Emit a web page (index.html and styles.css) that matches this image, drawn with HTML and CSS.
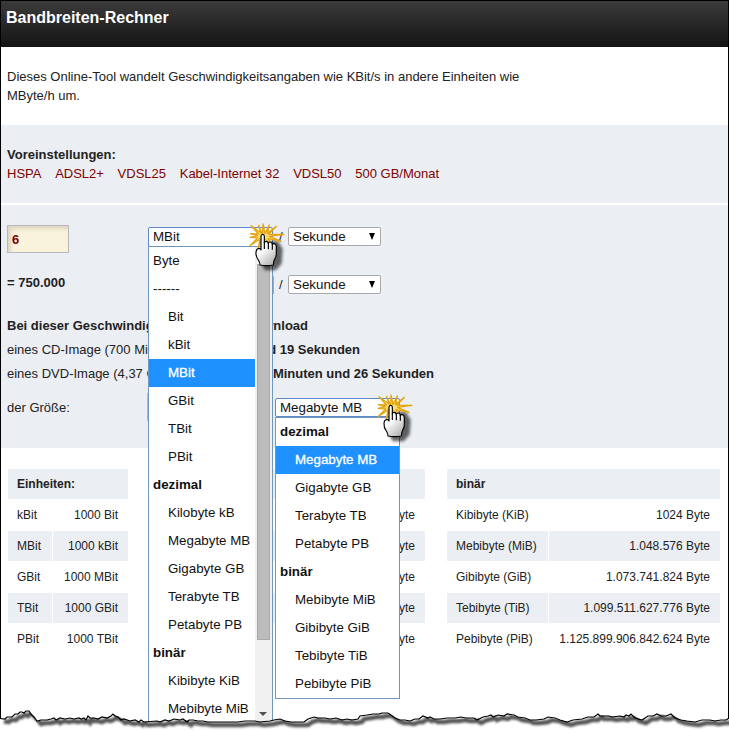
FILE: index.html
```html
<!DOCTYPE html>
<html lang="de">
<head>
<meta charset="utf-8">
<title>Bandbreiten-Rechner</title>
<link rel="stylesheet" href="styles.css">
</head>
<body>
<svg class="defs" width="0" height="0" aria-hidden="true">
  <defs>
    <filter id="soft" x="-50%" y="-50%" width="200%" height="200%"><feGaussianBlur stdDeviation="5"/></filter>
    <linearGradient id="skin" x1="0" y1="0" x2="0.6" y2="1"><stop offset="0.5" stop-color="#fff"/><stop offset="1" stop-color="#bbb"/></linearGradient>
    <symbol id="click" viewBox="0 0 180 180">
      <path d="M78 66h30l14 24-3 44-18 20H68l-8-16z" fill="#000" opacity=".6" filter="url(#soft)"/>
      <path d="M62 48 63 15 69 43 82 18 76 43 103 22 80 46 126 46 82 52 117 67 78 59 88 76 62 56 49 86 54 60 24 80 47 57 24 55 46 50 25 44 49 45 27 20 56 41 50 19z" fill="#f9dc70" stroke="#e3a611" stroke-width="4" stroke-linejoin="round"/>
      <path d="M57 92V52q0-6 5-6t5 6v20q1-5 6-5t6 6q1-4 6-4t6 7q2-3 6-2t6 7v22q0 10-5 17-3 7-4 18-20 4-40 0 0-8-5-15-8-10-7-23 1-11 9-12 4 0 6 5z" fill="url(#skin)" stroke="#000" stroke-width="3.5" stroke-linejoin="round"/>
      <path d="M67 70v20M79 72v19M91 75v17" stroke="#000" stroke-width="3.5"/>
    </symbol>
  </defs>
</svg>
<div class="page">
  <header class="head"><h1>Bandbreiten-Rechner</h1></header>
  <p class="intro">Dieses Online-Tool wandelt Geschwindigkeitsangaben wie KBit/s in andere Einheiten wie<br>MByte/h um.</p>
  <section class="presets">
    <b>Voreinstellungen:</b>
    <nav><a>HSPA</a><a>ADSL2+</a><a>VDSL25</a><a>Kabel-Internet 32</a><a>VDSL50</a><a>500 GB/Monat</a></nav>
  </section>
  <section class="calc">
    <div class="row">
      <div class="first"><div class="field">6</div></div>
      <div class="select unit focus">MBit
        <div class="menu long">
          <ul>
            <li>Byte</li><li>------</li><li class="sub">Bit</li><li class="sub">kBit</li><li class="sub on">MBit</li><li class="sub">GBit</li><li class="sub">TBit</li><li class="sub">PBit</li>
            <li class="group">dezimal</li><li class="sub">Kilobyte kB</li><li class="sub">Megabyte MB</li><li class="sub">Gigabyte GB</li><li class="sub">Terabyte TB</li><li class="sub">Petabyte PB</li>
            <li class="group">binär</li><li class="sub">Kibibyte KiB</li><li class="sub">Mebibyte MiB</li>
          </ul>
          <div class="bar"><div class="thumb"></div><div class="down"></div></div>
        </div>
        <svg class="cursor c1"><use href="#click"/></svg>
      </div>
      <span class="slash">/</span>
      <div class="select time">Sekunde<i></i></div>
    </div>
    <div class="row second">
      <div class="first"><b>= 750.000</b></div>
      <div class="select unit wide"></div>
      <span class="slash">/</span>
      <div class="select time">Sekunde<i></i></div>
    </div>
    <div class="result r1"><b>Bei dieser Geschwindig</b><b>Download</b></div>
    <div class="result r2"><span>eines CD-Image (700 Mi</span><b>und 19 Sekunden</b></div>
    <div class="result r3"><span>eines DVD-Image (4,37 G</span><b>Minuten und 26 Sekunden</b></div>
    <div class="row size">
      <div class="first">der Größe:</div>
      <div class="field blank"></div>
      <div class="select mega focus">Megabyte MB
        <div class="menu short">
          <ul>
            <li class="group">dezimal</li><li class="sub on">Megabyte MB</li><li class="sub">Gigabyte GB</li><li class="sub">Terabyte TB</li><li class="sub">Petabyte PB</li>
            <li class="group">binär</li><li class="sub">Mebibyte MiB</li><li class="sub">Gibibyte GiB</li><li class="sub">Tebibyte TiB</li><li class="sub">Pebibyte PiB</li>
          </ul>
        </div>
        <svg class="cursor c2"><use href="#click"/></svg>
      </div>
    </div>
  </section>
  <section class="tables">
    <table class="t1">
      <colgroup><col class="name"><col></colgroup>
      <tr><th colspan="2">Einheiten:</th></tr>
      <tr><td>kBit</td><td>1000 Bit</td></tr>
      <tr><td>MBit</td><td>1000 kBit</td></tr>
      <tr><td>GBit</td><td>1000 MBit</td></tr>
      <tr><td>TBit</td><td>1000 GBit</td></tr>
      <tr><td>PBit</td><td>1000 TBit</td></tr>
    </table>
    <table class="t2">
      <colgroup><col class="name"><col></colgroup>
      <tr><th colspan="2"></th></tr>
      <tr><td></td><td>Byte</td></tr>
      <tr><td></td><td>Byte</td></tr>
      <tr><td></td><td>Byte</td></tr>
      <tr><td></td><td>Byte</td></tr>
      <tr><td></td><td>Byte</td></tr>
    </table>
    <table class="t3">
      <colgroup><col class="name"><col></colgroup>
      <tr><th colspan="2">binär</th></tr>
      <tr><td>Kibibyte (KiB)</td><td>1024 Byte</td></tr>
      <tr><td>Mebibyte (MiB)</td><td>1.048.576 Byte</td></tr>
      <tr><td>Gibibyte (GiB)</td><td>1.073.741.824 Byte</td></tr>
      <tr><td>Tebibyte (TiB)</td><td>1.099.511.627.776 Byte</td></tr>
      <tr><td>Pebibyte (PiB)</td><td>1.125.899.906.842.624 Byte</td></tr>
    </table>
  </section>
  <svg class="torn" viewBox="0 0 729 31">
    <defs>
      <path id="edge" d="M0 18.500 5 19 7 17 12 17 15 14 18 14 20 12 22 12 24 13 26 11 29 11 31 14 34 17 37 21 41 20 47 20 51 19 54 18 56 20 60 18 65 19 70 18 74 19 79 18 81 19 84 18 86 20 88 16 90 18 94 18 98 19 102 17 107 18 111 16 113 14 115 16 118 17 121 20 124 19 130 21 135 20 139 22 141 20 144 22 157 21 160 22 165 20 169 21 174 19 180 20 183 19 187 22 189 20 193 20 198 21 203 21 208 22 238 22 245 21 255 21 260 22 270 21 274 20 280 19 285 21 291 22 304 22 308 19 314 17 318 18 325 18 330 19 336 18 342 20 347 19 352 20 358 19 360 16 367 15 373 14 379 14 382 13 388 13 391 15 395 18 400 20 405 20 410 21 415 19 419 19 423 16 428 18 430 17 434 19 440 19 447 18 455 18 461 17 466 18 474 18 477 20 483 17 488 16 491 15 493 17 498 15 504 16 507 14 514 15 518 17 525 18 530 20 536 20 544 19 548 17 555 18 560 20 567 22 573 20 582 19 588 17 594 17 598 14 600 16 609 16 612 17 620 16 624 17 626 15 629 16 631 14 635 18 642 20 648 16 653 16 657 14 661 16 666 16 671 14 675 18 681 20 687 21 695 22 702 20 710 20 715 21 721 20 726 20 729 18"/>
      <path id="below" d="M0 18.500 5 19 15 14 20 12 29 11 37 21 51 19 86 19 90 18 102 17 113 14 124 19 139 22 165 20 174 19 208 22 238 22 270 21 280 19 291 22 304 22 314 17 330 19 358 19 360 16 373 14 388 13 400 20 410 21 423 16 434 19 474 18 491 15 507 14 518 17 530 20 548 17 567 22 582 19 598 15 620 16 631 14 642 20 648 16 657 14 671 14 681 20 695 22 710 20 726 20 729 18V31H0z"/>
      <clipPath id="under"><use href="#below"/></clipPath>
      <filter id="shade" x="-5%" y="-100%" width="110%" height="300%"><feGaussianBlur stdDeviation="0.8"/></filter>
    </defs>
    <use href="#below" fill="#fff"/>
    <g clip-path="url(#under)"><use href="#edge" x="4" y="3" fill="none" stroke="#555" stroke-width="4.500" filter="url(#shade)"/></g>
    <use href="#edge" fill="none" stroke="#000" stroke-width="1.200"/>
  </svg>
</div>
</body>
</html>
```
FILE: styles.css
```css
* { box-sizing: border-box; }
body { margin: 0; background: #fff; color: #222; font: 13px/19px "Liberation Sans", sans-serif; }
.defs { position: absolute; }
.page { position: relative; height: 731px; overflow: hidden; padding: 1px 1px 0; }
.page::after { content: ""; position: absolute; z-index: 7; inset: 0; border: solid #000; border-width: 1px 1px 0; pointer-events: none; }
.head { height: 46px; padding: 7px 5px; background: linear-gradient(#3b3b3b, #141414); }
h1 { margin: 0; color: #fff; font: bold 16px/19px "Liberation Sans", sans-serif; }
.intro { height: 78px; margin: 0; padding: 20px 6px; white-space: nowrap; }
.presets { height: 78px; padding: 20px 6px; background: #ebeef3; border: 0; }
.presets b { display: block; }
.presets nav { display: flex; gap: 13.7px; color: #800000; }
.calc { height: 243px; margin-top: 2px; padding: 20px 0 0 6px; background: #ebeef3; }
.row { display: flex; height: 28px; }
.first { width: 141px; }
.field { width: 62px; height: 28px; padding: 4px; border: 1px solid #b8b8b8; background: #faf3dc; color: #800000; font-weight: bold; box-shadow: inset 3px 3px 4px #ddd5c2; }
.select { position: relative; height: 19px; margin-top: 2px; padding-left: 4px; border: 1px solid #a9a9a9; border-radius: 2px; background: #fff; color: #111; font: 13.333px/18px "Liberation Sans", sans-serif; }
.focus { border-color: #5d88ca; }
.unit { width: 125px; height: 20px; }
.wide { width: 126px; margin-right: -1px; }
.slash { width: 15px; padding: 2px 0 0 6px; }
.time { width: 93px; }
.time i { position: absolute; right: 5px; top: 5px; border: solid transparent; border-width: 7px 3.5px 0; border-top-color: #000; }
.second { margin-top: 20px; }
.result { display: flex; justify-content: space-between; height: 24px; line-height: 24px; white-space: nowrap; }
.r1 { width: 301px; margin-top: 13px; }
.r2 { width: 353px; }
.r3 { width: 427px; }
.size { margin-top: 7px; }
.size .first { padding-top: 5px; width: 140px; }
.blank { width: 110px; background: #fff; }
.mega { width: 125px; margin: 5px 0 0 18px; }
.menu { position: absolute; z-index: 2; left: -1px; display: flex; border: 1px solid #6e98bf; background: #fff; color: #111; }
.menu ul { flex: 1; margin: 0; padding: 0; list-style: none; }
.menu li { height: 28px; padding-left: 4px; line-height: 27px; white-space: nowrap; }
.menu .sub { padding-left: 19px; }
.menu .on { background: #1e90ff; color: #fff; -webkit-text-stroke: 0.3px #fff; }
.menu .group { font-weight: bold; }
.long { top: 18px; width: 125px; height: 480px; }
.short { top: 18px; width: 125px; height: 282px; }
.bar { width: 17px; padding: 17px 2px 0; background: #f0f0f0; }
.thumb { height: 376px; border: 1px solid #a8a8a8; background: #bcbcbc; }
.down { margin: 72px 0 0 2px; width: 8px; border: solid transparent; border-width: 4px 4px 0; border-top-color: #505050; }
.cursor { position: absolute; z-index: 5; width: 60px; height: 60px; }
.c1 { left: 93px; top: -9px; }
.c2 { left: 94px; top: -9px; }
.tables { display: flex; padding: 20px 0 0 6px; font-size: 12px; }
table { flex: none; border-spacing: 1px; table-layout: fixed; }
th, td { height: 30px; padding: 0 10px 0 9px; white-space: nowrap; text-align: right; }
th, td:first-child { text-align: left; }
td:first-child { padding-right: 0; }
td:last-child { padding-left: 0; }
tr:nth-child(odd) > * { background: #ebeef3; }
.t1 { width: 122px; }
.t1 .name { width: 44px; }
.t2 { width: 279px; margin-left: 18px; }
.t2 .name { width: 90px; }
.t3 { width: 275px; margin-left: 20px; }
.t3 .name { width: 101px; }
.torn { position: absolute; z-index: 8; left: 0; bottom: 0; width: 729px; height: 31px; }
```
